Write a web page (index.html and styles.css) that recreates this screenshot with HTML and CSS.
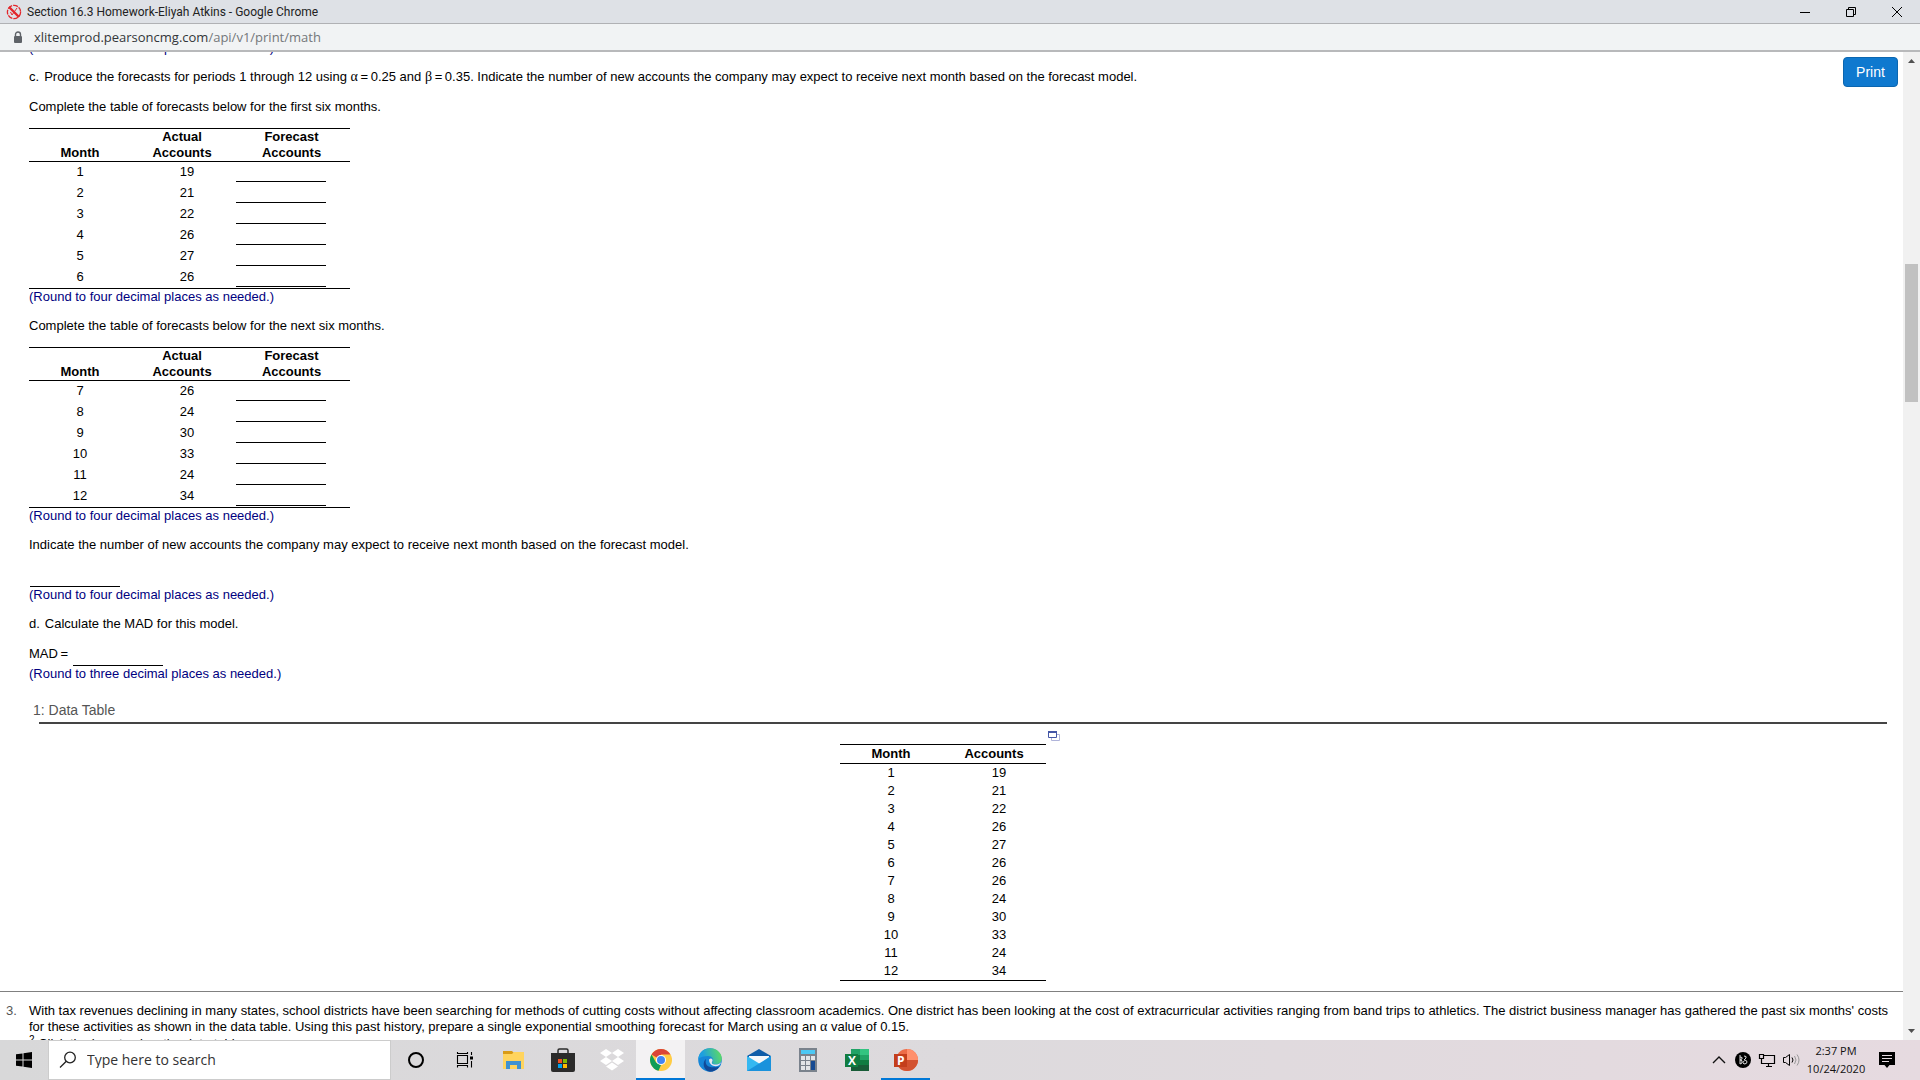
FILE: index.html
```html
<!DOCTYPE html>
<html lang="en">
<head>
    <meta charset="UTF-8">
    <meta name="viewport" content="width=device-width, initial-scale=1.0">
    <title>Section 16.3 Homework-Eliyah Atkins</title>
    <link rel="stylesheet" href="styles.css">
</head>
<body>
    <header class="titlebar">
        <svg class="favicon" width="16" height="16" viewBox="0 0 16 16" fill="none" stroke="#e3262b">
            <circle cx="8" cy="8" r="6.6" stroke-width="1.3" stroke-dasharray="5 1"/>
            <path d="M3 3l10 10" stroke-width="2.4"/>
            <path d="M6 11l5-7M4.500 8l1.500 3" stroke-width="1"/>
        </svg>
        <span class="title">Section 16.3 Homework-Eliyah Atkins - Google Chrome</span>
        <div class="window-buttons">
            <button aria-label="Minimize"><svg width="12" height="12" viewBox="0 0 12 12"><path d="M1 6.5h10" stroke="#000"/></svg></button>
            <button aria-label="Restore"><svg width="12" height="12" viewBox="0 0 12 12" fill="none" stroke="#000"><path d="M1.500 3.500h7v7h-7zM3.500 3.500v-2h7v7h-2"/></svg></button>
            <button aria-label="Close"><svg width="12" height="12" viewBox="0 0 12 12"><path d="M1 1l10 10M11 1L1 11" stroke="#000"/></svg></button>
        </div>
    </header>

    <div class="address">
        <svg width="10" height="13" viewBox="0 0 10 13"><path d="M2.500 5V3.500a2.500 2.500 0 0 1 5 0V5" fill="none" stroke="#5f6368" stroke-width="1.400"/><rect x="1" y="5" width="8" height="7" rx="1" fill="#5f6368"/></svg>
        <span class="url">xlitemprod.pearsoncmg.com<span class="path">/api/v1/print/math</span></span>
    </div>

    <div class="view">
        <main class="page">
            <button class="print">Print</button>

            <section class="question">
                <p class="note first">(Round to four decimal places as needed.)</p>
                <p class="part"><span class="letter">c.</span>Produce the forecasts for periods 1 through 12 using <span class="greek">α</span>&thinsp;=&thinsp;0.25 and <span class="greek">β</span>&thinsp;=&thinsp;0.35. Indicate the number of new accounts the company may expect to receive next month based on the forecast model.</p>
                <p>Complete the table of forecasts below for the first six months.</p>
                <table class="forecast">
                    <thead>
                        <tr><th>Month</th><th>Actual<br>Accounts</th><th>Forecast<br>Accounts</th></tr>
                    </thead>
                    <tbody>
                        <tr><td>1</td><td>19</td><td><input type="text" aria-label="Forecast, month 1"></td></tr>
                        <tr><td>2</td><td>21</td><td><input type="text" aria-label="Forecast, month 2"></td></tr>
                        <tr><td>3</td><td>22</td><td><input type="text" aria-label="Forecast, month 3"></td></tr>
                        <tr><td>4</td><td>26</td><td><input type="text" aria-label="Forecast, month 4"></td></tr>
                        <tr><td>5</td><td>27</td><td><input type="text" aria-label="Forecast, month 5"></td></tr>
                        <tr><td>6</td><td>26</td><td><input type="text" aria-label="Forecast, month 6"></td></tr>
                    </tbody>
                </table>
                <p class="note">(Round to four decimal places as needed.)</p>
                <p>Complete the table of forecasts below for the next six months.</p>
                <table class="forecast">
                    <thead>
                        <tr><th>Month</th><th>Actual<br>Accounts</th><th>Forecast<br>Accounts</th></tr>
                    </thead>
                    <tbody>
                        <tr><td>7</td><td>26</td><td><input type="text" aria-label="Forecast, month 7"></td></tr>
                        <tr><td>8</td><td>24</td><td><input type="text" aria-label="Forecast, month 8"></td></tr>
                        <tr><td>9</td><td>30</td><td><input type="text" aria-label="Forecast, month 9"></td></tr>
                        <tr><td>10</td><td>33</td><td><input type="text" aria-label="Forecast, month 10"></td></tr>
                        <tr><td>11</td><td>24</td><td><input type="text" aria-label="Forecast, month 11"></td></tr>
                        <tr><td>12</td><td>34</td><td><input type="text" aria-label="Forecast, month 12"></td></tr>
                    </tbody>
                </table>
                <p class="note">(Round to four decimal places as needed.)</p>
                <p><label for="next">Indicate the number of new accounts the company may expect to receive next month based on the forecast model.</label></p>
                <div class="answer"><input type="text" id="next"></div>
                <p class="note">(Round to four decimal places as needed.)</p>
                <p><span class="letter">d.</span>Calculate the MAD for this model.</p>
                <div class="answer"><label for="mad">MAD&thinsp;=</label><input type="text" id="mad"></div>
                <p class="note">(Round to three decimal places as needed.)</p>
            </section>

            <section class="appendix">
                <h2>1: Data Table</h2>
                <div class="data-wrap">
                    <table class="data">
                        <thead>
                            <tr><th>Month</th><th>Accounts</th></tr>
                        </thead>
                        <tbody>
                            <tr><td>1</td><td>19</td></tr>
                            <tr><td>2</td><td>21</td></tr>
                            <tr><td>3</td><td>22</td></tr>
                            <tr><td>4</td><td>26</td></tr>
                            <tr><td>5</td><td>27</td></tr>
                            <tr><td>6</td><td>26</td></tr>
                            <tr><td>7</td><td>26</td></tr>
                            <tr><td>8</td><td>24</td></tr>
                            <tr><td>9</td><td>30</td></tr>
                            <tr><td>10</td><td>33</td></tr>
                            <tr><td>11</td><td>24</td></tr>
                            <tr><td>12</td><td>34</td></tr>
                        </tbody>
                    </table>
                    <svg width="12" height="10" viewBox="0 0 12 10" fill="none"><path d="M3.500 3.500h8v6h-8z" fill="#fff" stroke="#b0b4da"/><path d="M.5.5h8v6h-8z" fill="#fff" stroke="#4456a6"/><path d="M0 1h9" stroke="#4456a6" stroke-width="2"/></svg>
                </div>
            </section>

            <section class="next-question">
                <span class="number">3.</span>
                <div>
                    <p>With tax revenues declining in many states, school districts have been searching for methods of cutting costs without affecting classroom academics. One district has been looking at the cost of extracurricular activities ranging from band trips to athletics. The district business manager has gathered the past six months' costs for these activities as shown in the data table. Using this past history, prepare a single exponential smoothing forecast for March using an <span class="greek">α</span> value of 0.15.</p>
                    <p><sup>2</sup> Click the icon to view the data table.</p>
                </div>
            </section>
        </main>

        <div class="scrollbar">
            <svg width="17" height="17" viewBox="0 0 17 17"><path d="M5 11l3.500-4 3.500 4z" fill="#505050"/></svg>
            <div class="thumb"></div>
            <svg class="down" width="17" height="17" viewBox="0 0 17 17"><path d="M5 6l3.500 4L12 6z" fill="#505050"/></svg>
        </div>
    </div>

    <footer class="taskbar">
        <button class="start" aria-label="Start"><svg width="16" height="16" viewBox="0 0 16 16"><path d="M0 2.300L6.500 1.400v6.100H0zM7.500 1.200L16 0v7.500H7.500zM0 8.500h6.500v6.100L0 13.700zM7.500 8.500H16V16l-8.500-1.200z"/></svg></button>
        <div class="search">
            <svg width="18" height="18" viewBox="0 0 18 18" fill="none" stroke="#222" stroke-width="1.300"><circle cx="11" cy="6.500" r="5.300"/><path d="M7.300 10.300L1 16.500"/></svg>
            <input type="text" placeholder="Type here to search" aria-label="Search">
        </div>
        <nav class="apps">
            <button aria-label="Cortana"><svg width="24" height="24" viewBox="0 0 24 24" fill="none"><circle cx="12" cy="12" r="7" stroke="#000" stroke-width="2"/></svg></button>
            <button aria-label="Task View"><svg width="24" height="24" viewBox="0 0 24 24" fill="none" stroke="#000"><path d="M4.500 7.500h10v8h-10zM4.500 4v1.500h10V4M4.500 19.500v-2h10v2M18.500 4v3M18.500 13v6.500" stroke-width="1.100"/><path d="M17 8.500h3v3h-3z" fill="#000" stroke="none"/></svg></button>
            <button aria-label="File Explorer"><svg width="24" height="24" viewBox="0 0 24 24"><path d="M1 3h9l2 2h10v4H1z" fill="#d99b16"/><path d="M1 6h9l2-2h10v17H1z" fill="#ffd45e"/><path d="M4 21v-8h15v8h-4v-4H8v4z" fill="#3f92d2"/></svg></button>
            <button aria-label="Microsoft Store"><svg width="24" height="24" viewBox="0 0 24 24"><path d="M7 6V2.500Q7 1 8.500 1h7Q17 1 17 2.500V6" fill="none" stroke="#2b2b2b" stroke-width="1.500"/><path d="M0 5h24v17q0 2-2 2H2q-2 0-2-2z" fill="#2b2b2b"/><path d="M7 11h4v4H7z" fill="#f25022"/><path d="M12 11h4v4h-4z" fill="#7fba00"/><path d="M7 16h4v4H7z" fill="#00a4ef"/><path d="M12 16h4v4h-4z" fill="#ffb900"/></svg></button>
            <button aria-label="Dropbox"><svg width="24" height="24" viewBox="0 0 24 24" fill="#fff"><path d="M6 1l6 4-6 4-6-4zM18 1l6 4-6 4-6-4zM6 9l6 4-6 4-6-4zM18 9l6 4-6 4-6-4zM12 14.500l6 4-6 4-6-4z"/></svg></button>
            <button class="active" aria-label="Google Chrome"><svg width="24" height="24" viewBox="0 0 24 24"><circle cx="12" cy="12" r="11" fill="#fc4"/><path d="M12 12L2.500 6.500A11 11 0 0 1 21.500 6.500H12z" fill="#db4437"/><path d="M2.500 6.500L7.200 14.700 12 17l-2.500 5.700A11 11 0 0 1 2.500 6.500z" fill="#0f9d58"/><circle cx="12" cy="12" r="5" fill="#fff"/><circle cx="12" cy="12" r="4" fill="#4285f4"/></svg></button>
            <button aria-label="Microsoft Edge"><svg width="24" height="24" viewBox="0 0 24 24"><defs><linearGradient id="edge" x1="0" y1="0.500" x2="1" y2="0.300"><stop offset="0.200" stop-color="#1d9fe0"/><stop offset="1" stop-color="#5fdc60"/></linearGradient></defs><circle cx="12" cy="12" r="11.800" fill="#1686d8"/><path d="M.3 11C1 4 6 .2 12 .2c7 0 11.800 5 11.800 10 0 4-3 6-6.300 6-3 0-4-1.200-3-2.500 1.500-2-.2-5.700-4.500-5.700C6 8 2 9 .3 11z" fill="url(#edge)"/><path d="M8 11c-2 7 4 10 13.500 7.500A12 12 0 0 1 12 23.800C5 22.500 4 14 8 11z" fill="#114a98"/><path d="M11 11.500c2-2 4-.5 3.500 1.500-1.500 2-.5 3.500 3 3.500 2 0 4.300-.8 5.600-2.600-1 6-12 6-12.100-2.400z" fill="#e8e8ec"/></svg></button>
            <button aria-label="Mail"><svg width="24" height="24" viewBox="0 0 24 24"><path d="M0 8l12-7 12 7v4H0z" fill="#0f5ca8"/><path d="M2 8h20v9H2z" fill="#f5f7fa"/><path d="M0 8l13 8 11-8v15H0z" fill="#35b8f1"/><path d="M0 23L24 8v15z" fill="#1a92dc"/></svg></button>
            <button aria-label="Calculator"><svg width="24" height="24" viewBox="0 0 24 24"><path d="M3 0h18v24H3z" fill="#7a828c"/><path d="M5 2h14v4H5z" fill="#4cc8f4"/><path d="M5 8h4v4H5zM10 8h4v4h-4zM15 8h4v4h-4zM5 13h4v4H5zM10 13h4v4h-4zM5 18h4v4H5zM10 18h4v4h-4z" fill="#e3e5e8"/><path d="M15 13h4v9h-4z" fill="#164a92"/></svg></button>
            <button aria-label="Excel"><svg class="office" width="24" height="24" viewBox="0 0 24 24"><path d="M6 1h18v22H6z" fill="#107c41"/><path d="M6 1h9v6H6z" fill="#21a366"/><path d="M15 1h9v6h-9z" fill="#33c481"/><path d="M15 7h9v5h-9z" fill="#21a366"/><path d="M6 17h18v6H6z" fill="#185c37"/><path d="M0 6h13v13H0z" fill="#107c41"/><text x="3" y="17">X</text></svg></button>
            <button class="running" aria-label="PowerPoint"><svg class="office" width="24" height="24" viewBox="0 0 24 24"><circle cx="13" cy="12" r="11" fill="#ed6c47"/><path d="M13 1a11 11 0 0 1 11 11H13z" fill="#ff8f6b"/><path d="M2 12h22a11 11 0 0 1-22 0z" fill="#d35230"/><path d="M0 6h13v13H0z" fill="#c43e1c"/><text x="3" y="17">P</text></svg></button>
        </nav>
        <div class="tray">
            <svg width="24" height="24" viewBox="0 0 24 24" fill="none" stroke="#111" stroke-width="1.400"><path d="M6 15l6-6 6 6"/></svg>
            <svg width="24" height="24" viewBox="0 0 24 24"><circle cx="12" cy="12" r="8" fill="#000"/><path d="M9 7v9M9 9q3 0 2 2l-2 1q3 0 2 3l-2 1M13 8q3 0 2 2l-2 2q3 0 3 2t-3 2q-2-1 0-3" fill="none" stroke="#ddd"/></svg>
            <svg width="24" height="24" viewBox="0 0 24 24" fill="none" stroke="#000"><path d="M8 7.500h11.500v8H6.500V12M11 18.500h6M13.500 16v2.500M4.500 6.500h4v4h-4zM6.500 10.500v5" stroke-width="1.200"/></svg>
            <svg width="24" height="24" viewBox="0 0 24 24" fill="none" stroke="#000"><path d="M4.500 9.500h2l4-3v11l-4-3h-2z"/><path d="M13 9.500q2 2.500 0 5"/><path d="M15.500 8q3 4 0 8M18 6.500q4 5.500 0 11" stroke="#999"/></svg>
            <div class="clock"><time>2:37 PM</time><time>10/24/2020</time></div>
            <svg class="notify" width="16" height="16" viewBox="0 0 16 16"><path d="M0 0h16v13h-5.500L8 16l-2.500-3H0z"/><path d="M3 3.500h10M3 6.500h10M3 9.500h7" stroke="#e5dae0"/></svg>
        </div>
    </footer>
</body>
</html>
```
FILE: styles.css
```css
* {
    box-sizing: border-box;
}

body {
    margin: 0;
    height: 100vh;
    display: flex;
    flex-direction: column;
    overflow: hidden;
    background-color: #fff;
    font-family: "Liberation Sans", Arial, sans-serif;
    font-size: 13px;
    line-height: 16px;
    color: #000;
}

button {
    border: none;
    background: none;
    padding: 0;
    font-family: inherit;
}

svg {
    display: block;
    flex: none;
}

/* Browser window */
.titlebar {
    height: 24px;
    flex: none;
    display: flex;
    align-items: center;
    gap: 5px;
    padding-left: 6px;
    background-color: #dee1e6;
    border-bottom: 1px solid #b0b1b4;
}

.title {
    flex: 1;
    font-family: Roboto, sans-serif;
    font-size: 12px;
    color: #222;
}

.window-buttons {
    display: flex;
}

.window-buttons button {
    width: 46px;
    height: 20px;
    display: flex;
    justify-content: center;
    align-items: center;
}

.address {
    height: 28px;
    flex: none;
    display: flex;
    align-items: center;
    gap: 11px;
    padding-left: 13px;
    background-color: #f1f3f4;
    border-bottom: 2px solid #b8b9bb;
}

.url {
    font-family: "Open Sans", sans-serif;
    font-size: 13px;
    color: #333639;
}

.path {
    color: #74777a;
}

.view {
    flex: 1;
    min-height: 0;
    display: flex;
}

.page {
    flex: 1;
    position: relative;
    overflow: hidden;
}

.print {
    position: absolute;
    top: 5px;
    right: 5px;
    width: 55px;
    height: 30px;
    border: 1px solid #0b66b0;
    border-radius: 4px;
    background-color: #0f79cf;
    color: #fff;
    font-size: 14px;
}

/* Question */
.question {
    padding: 0 14px 0 29px;
}

p {
    margin: 13px 0;
}

.note {
    margin: 0;
    color: #000080;
}

.first {
    margin-top: -12px;
}

.part {
    margin-bottom: 14px;
}

.letter {
    margin-right: 5px;
}

.greek {
    font-family: "Liberation Serif", serif;
    font-size: 14px;
    line-height: 14px;
}

table {
    border-collapse: separate;
    border-spacing: 0;
    table-layout: fixed;
    text-align: center;
    border-top: 1px solid #000;
    border-bottom: 1px solid #000;
}

th, td {
    padding: 0;
    width: 102px;
}

th {
    vertical-align: bottom;
    border-bottom: 1px solid #000;
}

td:nth-child(2) {
    padding-left: 10px;
}

.forecast {
    width: 321px;
}

.forecast th:nth-child(3) {
    width: 117px;
}

.forecast td {
    height: 21px;
    padding-top: 2px;
    vertical-align: top;
}

.forecast td:nth-child(3) {
    padding: 0 0 0 3px;
    text-align: left;
}

input {
    border: none;
    outline: none;
    background: transparent;
    font: inherit;
    padding: 0;
}

.question input {
    display: block;
    width: 90px;
    height: 20px;
    border-bottom: 1px solid #000;
}

.answer {
    display: flex;
    gap: 5px;
    margin-top: 14px;
}

#next {
    margin-left: 1px;
}

/* Data table */
.appendix h2 {
    margin: 20px 16px 0 39px;
    padding-bottom: 4px;
    border-bottom: 2px solid #444;
    font-size: 14px;
    font-weight: normal;
    text-indent: -6px;
    color: #555;
}

.data-wrap {
    display: flex;
    justify-content: center;
    gap: 2px;
    padding: 7px 4px 10px 0;
}

.data {
    width: 206px;
    margin-top: 13px;
}

.data th, .data td {
    height: 18px;
}

.data th {
    height: 19px;
    vertical-align: middle;
}

.next-question {
    display: flex;
    padding: 11px 14px 0 6px;
    border-top: 1px solid #808080;
}

.next-question p {
    margin: 0;
}

.number {
    width: 23px;
    flex: none;
    color: #555;
}

sup {
    font-size: 10px;
    line-height: 10px;
}

.scrollbar {
    width: 17px;
    flex: none;
    display: flex;
    flex-direction: column;
    background-color: #f1f1f1;
}

.thumb {
    width: 13px;
    height: 138px;
    margin: 195px 2px 0;
    background-color: #c1c1c1;
}

.down {
    margin-top: auto;
}

/* Taskbar */
.taskbar {
    height: 40px;
    flex: none;
    display: flex;
    background: linear-gradient(to right, #d8d8d9, #dddadd 50%, #e6dae0);
    font-family: "Open Sans", sans-serif;
}

.taskbar button {
    width: 49px;
    display: flex;
    justify-content: center;
    align-items: center;
}

.taskbar .start {
    width: 48px;
}

.search {
    width: 343px;
    display: flex;
    align-items: center;
    gap: 10px;
    padding-left: 10px;
    background-color: #fff;
    border: 1px solid #ccc;
}

.search input {
    flex: 1;
    min-width: 0;
    font-size: 14px;
}

.search input::placeholder {
    color: #333;
    opacity: 1;
}

.apps {
    flex: 1;
    display: flex;
}

.apps .active {
    background-color: #f3f2f3;
}

.apps .active, .apps .running {
    border-top: 2px solid transparent;
    border-bottom: 2px solid #0078d7;
}

.office text {
    font-family: "Open Sans", sans-serif;
    font-size: 12px;
    font-weight: bold;
    fill: #fff;
}

.tray {
    display: flex;
    align-items: center;
    padding-right: 25px;
}

.clock {
    width: 66px;
    display: flex;
    flex-direction: column;
    align-items: center;
    margin-right: 10px;
    font-size: 11px;
    line-height: 18px;
    color: #111;
}
```
